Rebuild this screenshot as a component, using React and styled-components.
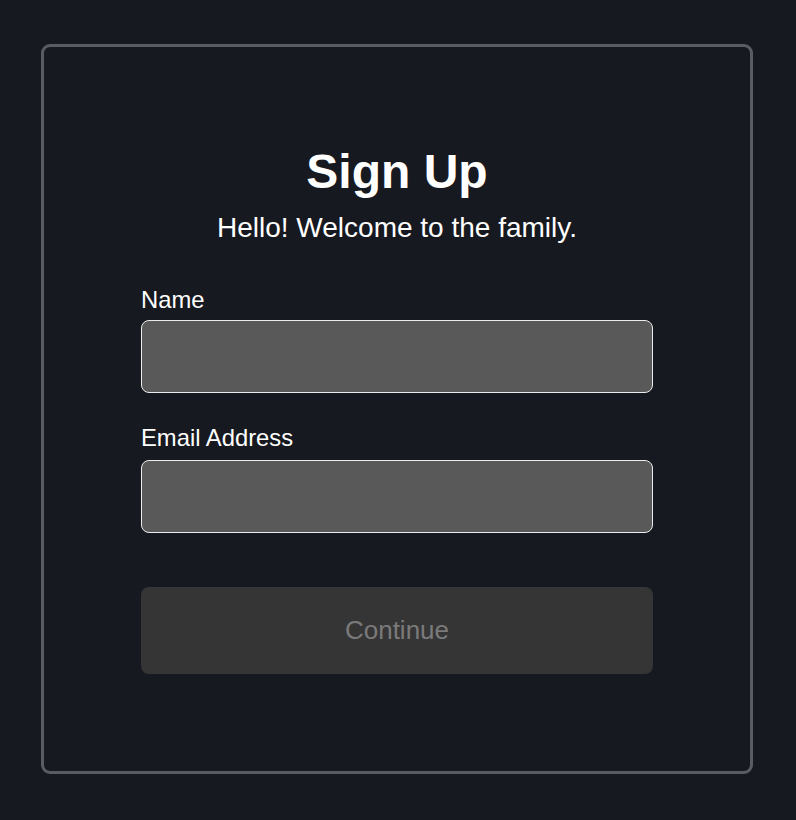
import React from "react";
import styled, { createGlobalStyle } from "styled-components";

const GlobalStyle = createGlobalStyle`
  html, body {
    margin: 0;
    padding: 0;
    background-color: #171920;
  }
  body {
    font-family: "Liberation Sans", Arial, sans-serif;
  }
`;

const Page = styled.div`
  box-sizing: border-box;
  width: 796px;
  height: 820px;
  padding: 44px 43px 46px 41px;
  display: flex;
`;

const Card = styled.div`
  box-sizing: border-box;
  flex: 1;
  border: 3px solid #5a5c63;
  border-radius: 9px;
  background-color: #171920;
  display: flex;
  flex-direction: column;
  align-items: center;
  padding-top: 97px;
`;

const Title = styled.h1`
  margin: 0;
  font-size: 48px;
  line-height: 56px;
  font-weight: 700;
  color: #ffffff;
`;

const Subtitle = styled.p`
  margin: 12px 0 0;
  font-size: 28px;
  line-height: 32px;
  color: #ffffff;
`;

const Form = styled.form`
  width: 512px;
  display: flex;
  flex-direction: column;
  margin-top: 42px;
`;

const Field = styled.div`
  display: flex;
  flex-direction: column;
  margin-bottom: ${(props) => props.$gap || 0}px;
`;

const Label = styled.label`
  font-size: 23.8px;
  line-height: 28px;
  color: #ffffff;
  margin-bottom: ${(props) => props.$gap}px;
`;

const Input = styled.input`
  box-sizing: border-box;
  width: 100%;
  height: 73px;
  border: 1.5px solid #ececec;
  border-radius: 8px;
  background-color: #595959;
  color: #ffffff;
  font-family: inherit;
  font-size: 22px;
  padding: 0 16px;
  outline: none;
`;

const Button = styled.button`
  box-sizing: border-box;
  width: 100%;
  height: 87px;
  border: none;
  border-radius: 8px;
  background-color: #353535;
  color: #7a7a7a;
  font-family: inherit;
  font-size: 26px;
  cursor: not-allowed;
`;

const App = () => {
  return (
    <>
      <GlobalStyle />
      <Page>
        <Card>
          <Title>Sign Up</Title>
          <Subtitle>Hello! Welcome to the family.</Subtitle>
          <Form onSubmit={(e) => e.preventDefault()}>
            <Field $gap={31}>
              <Label htmlFor="name" $gap={6}>Name</Label>
              <Input id="name" type="text" />
            </Field>
            <Field $gap={54}>
              <Label htmlFor="email" $gap={8}>Email Address</Label>
              <Input id="email" type="email" />
            </Field>
            <Button type="submit" disabled>
              Continue
            </Button>
          </Form>
        </Card>
      </Page>
    </>
  );
};

export default App;
